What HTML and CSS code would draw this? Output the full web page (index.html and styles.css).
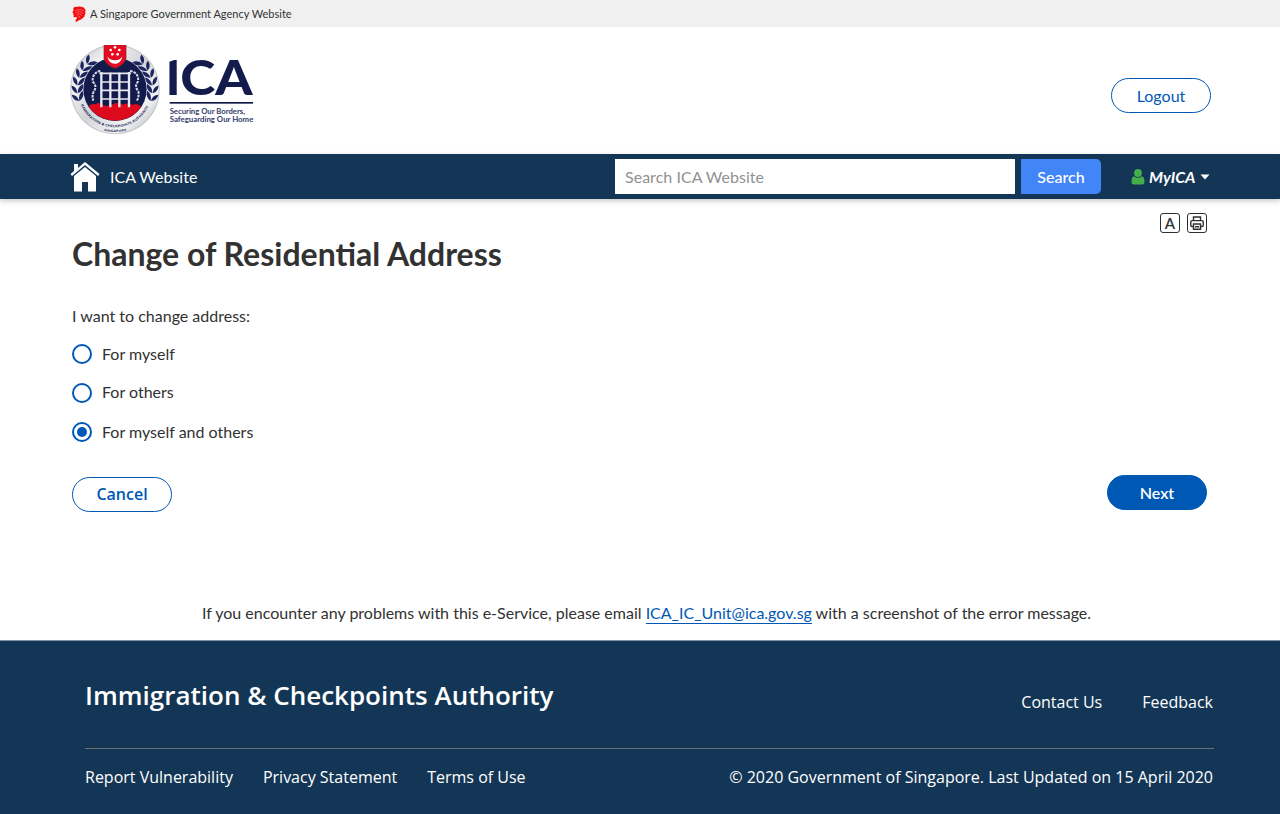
FILE: index.html
```html
<!DOCTYPE html>
<html lang="en">
<head>
<meta charset="utf-8">
<title>Change of Residential Address</title>
<link rel="stylesheet" href="styles.css">
</head>
<body>
<div class="masthead">
  <svg class="lion" viewBox="0 0 42 48"><path fill="#f40b0b" d="M5 5Q9 0 14 3Q20 0 27 2Q37 3 39 10L41 14L39 18L41 22L38 26V31L33 35L29 40L22 42L13 48Q9 45 11 42Q17 36 14 33L6 34L4 30L7 28L3 27L5 23L1 19L5 13Q2 8 5 5Z"/><path fill="none" stroke="#f8c4c4" stroke-width="1.3" d="M10 13Q24 7 36 14M9 19Q24 13 34 22M13 25Q24 20 30 29M16 30Q22 27 24 36"/></svg>
  <span class="masthead-text">A Singapore Government Agency Website</span>
</div>
<header class="header">
  <svg class="logo" viewBox="30 135 552 270">
    <defs>
      <linearGradient id="silver" x1="0" y1="0" x2="1" y2="1"><stop offset="0" stop-color="#aeb0b5"/><stop offset=".25" stop-color="#f1f1f3"/><stop offset=".5" stop-color="#d4d5d8"/><stop offset=".75" stop-color="#f4f4f5"/><stop offset="1" stop-color="#a4a6aa"/></linearGradient>
      <clipPath id="disc"><circle cx="165" cy="268" r="94"/></clipPath>
      <g id="leaf"><path d="M52 276Q34 270 35 252Q51 256 52 276Z"/><path d="M53 276Q53 256 70 249Q72 269 53 276Z"/></g>
      <g id="branch" fill="#1c2560">
        <use href="#leaf" transform="rotate(-14 165 268)"/><use href="#leaf" transform="rotate(-2 165 268)"/><use href="#leaf" transform="rotate(10 165 268)"/><use href="#leaf" transform="rotate(22 165 268)"/><use href="#leaf" transform="rotate(34 165 268)"/><use href="#leaf" transform="rotate(46 165 268)"/>
      </g>
      <path id="ringText" d="M62 314A112 112 0 0 0 268 314"/>
      <path id="ringCity" d="M120 389Q165 403 210 389"/>
    </defs>
    <circle cx="165" cy="268" r="135" fill="url(#silver)"/>
    <circle cx="165" cy="268" r="133" fill="none" stroke="#b4b6ba" stroke-width="2"/>
    <use href="#branch"/>
    <use href="#branch" transform="translate(330 0) scale(-1 1)"/>
    <circle cx="165" cy="268" r="95" fill="#131b4d"/>
    <path clip-path="url(#disc)" fill="#dc0a1c" d="M60 325L85 320Q92 309 106 313Q119 304 130 315Q143 322 157 313Q176 304 191 314Q204 307 218 315Q232 307 244 321L270 326V370H60Z"/>
    <path fill="none" stroke="#e7e8ee" stroke-width="7" d="M124 216V322M151 218V322M178 218V322M207 216V322"/>
    <path fill="none" stroke="#e7e8ee" stroke-width="5" d="M118 220H213M124 246H207M124 271H207M124 297H207"/>
    <g fill="none" stroke="#d6d8e2" stroke-width="6" stroke-dasharray="8 3"><path d="M121 212Q96 219 98 245Q113 258 101 275Q95 288 100 302"/><path d="M210 212Q238 219 234 245Q222 258 235 274Q238 288 231 302"/></g>
    <path fill="#e40b20" stroke="#8c2034" stroke-width="2" d="M132 135H198V175Q194 195 165 205Q136 195 132 175Z"/>
    <path fill="#fff" d="M142 169Q147 194 169 191Q184 189 187 169Q181 181 165 181Q148 181 142 169Z"/>
    <g fill="#fff"><circle cx="165" cy="142" r="4"/><circle cx="152" cy="150" r="4"/><circle cx="178" cy="150" r="4"/><circle cx="157" cy="163" r="4"/><circle cx="173" cy="163" r="4"/></g>
    <text class="seal-text"><textPath href="#ringText" textLength="256" lengthAdjust="spacingAndGlyphs">IMMIGRATION &amp; CHECKPOINTS AUTHORITY</textPath></text>
    <text class="seal-text seal-city"><textPath href="#ringCity" startOffset="12" textLength="68" lengthAdjust="spacingAndGlyphs">SINGAPORE</textPath></text>
    <text class="logo-name" y="285"><tspan x="317">I</tspan><tspan x="361" textLength="217" lengthAdjust="spacingAndGlyphs">CA</tspan></text>
    <path fill="#fff" d="M324 172H351V177L324 187Z"/>
    <rect x="329" y="306" width="250" height="5" fill="#131b4d"/>
    <text class="logo-tag" x="329" y="341" textLength="226" lengthAdjust="spacingAndGlyphs">Securing Our Borders,</text>
    <text class="logo-tag" x="329" y="366" textLength="251" lengthAdjust="spacingAndGlyphs">Safeguarding Our Home</text>
  </svg>
  <button class="pill logout">Logout</button>
</header>
<nav class="nav">
  <a class="home"><svg class="home-icon" viewBox="0 0 30 30"><path fill="#fff" d="M4 2H8V6L15 0L29.5 12L28 14L15 3L2 14L.5 12L4 9ZM15 5L26 14V29.5H18V20H12V29.5H4V14Z"/></svg><span class="home-text">ICA Website</span></a>
  <div class="search"><div class="search-input">Search ICA Website</div><button class="search-button">Search</button></div>
  <a class="account"><svg class="person" viewBox="0 0 14 16"><circle cx="7" cy="4" r="3.9" fill="#43ae4a"/><path fill="#43ae4a" d="M3 7.2Q7 10.4 11 7.2Q13.5 8 13.5 13Q13.5 15.5 11 15.5H3Q.5 15.5 .5 13Q.5 8 3 7.2Z"/></svg><span class="account-text">MyICA</span><svg class="caret" viewBox="0 0 10 6"><path fill="#fff" d="M.5.5H9.5L5 5.5Z"/></svg></a>
</nav>
<main class="main">
  <div class="tools">
    <span class="tool">A</span>
    <span class="tool"><svg class="printer" viewBox="0 0 14 14" fill="none" stroke="#2d3030" stroke-width="1.4"><path d="M3.5 4.5V1H10.5V4.5M3.5 10.5H2Q.8 10.5 .8 9.5V6Q.8 4.6 2 4.6H12Q13.2 4.6 13.2 6V9.5Q13.2 10.5 12 10.5H10.5M3.5 8H10.5V13.2H3.5ZM5 10.7H9"/></svg></span>
  </div>
  <h1 class="title">Change of Residential Address</h1>
  <p class="question">I want to change address:</p>
  <div class="options">
    <label class="option"><span class="radio"></span><span class="option-text">For myself</span></label>
    <label class="option option-others"><span class="radio"></span><span class="option-text">For others</span></label>
    <label class="option"><span class="radio radio-on"></span><span class="option-text">For myself and others</span></label>
  </div>
  <div class="actions"><button class="pill cancel">Cancel</button><button class="pill next">Next</button></div>
  <p class="help">If you encounter any problems with this e-Service, please email <a class="mail">ICA_IC_Unit@ica.gov.sg</a> with a screenshot of the error message.</p>
</main>
<footer class="footer">
  <div class="footer-top"><h2 class="agency">Immigration &amp; Checkpoints Authority</h2><div class="contact"><a>Contact Us</a><a>Feedback</a></div></div>
  <div class="footer-bottom"><div class="legal"><a>Report Vulnerability</a><a>Privacy Statement</a><a>Terms of Use</a></div><span>© 2020 Government of Singapore. Last Updated on 15 April 2020</span></div>
</footer>
</body>
</html>
```
FILE: styles.css
```css
* { box-sizing: border-box; }
body { margin: 0; height: 814px; display: flex; flex-direction: column; background: #fff; color: #323232; font: 16px/24px Lato, sans-serif; overflow: hidden; }
h1, h2, p { margin: 0; }
button { font: inherit; padding: 0; border: 0; }
.masthead { height: 27px; background: #f0f0f0; display: flex; align-items: center; padding: 0 0 0 72px; gap: 4px; font-size: 11px; line-height: 16px; }
.masthead-text { padding-top: 1px; }
.lion { width: 14px; height: 16px; }
.header { height: 127px; display: flex; justify-content: space-between; padding: 18px 69px 0 70px; }
.logo { width: 184px; height: 90px; }
.seal-text { font: 700 10px "Open Sans", sans-serif; fill: #272e62; }
.seal-city { font-size: 9px; }
.logo-name { font: 900 145px Lato, sans-serif; fill: #131b4d; }
.logo-tag { font: 700 22px Lato, sans-serif; fill: #343b6b; }
.pill { width: 100px; height: 35px; border-radius: 18px; border: 1px solid #0058b5; background: #fff; color: #0058b5; }
.logout { margin-top: 33px; padding-top: 1px; }
.nav { height: 45px; flex: none; display: flex; align-items: center; padding: 0 60px 0 70px; background: #143656; color: #fff; box-shadow: 0 2px 5px rgba(0,0,0,.22); }
.home { display: flex; align-items: center; gap: 10px; width: 545px; flex: none; }
.home-icon { width: 30px; height: 30px; }
.search { display: flex; gap: 6px; flex: none; }
.search-input { width: 400px; height: 35px; background: #fff; color: #919191; padding: 6px 10px; letter-spacing: .03px; }
.search-button { width: 80px; height: 35px; border-radius: 0 5px 5px 0; background: #4285f9; color: #fff; font-weight: 500; }
.account { display: flex; align-items: center; margin-left: 29.5px; }
.person { width: 14px; height: 16px; }
.account-text { font-weight: 700; font-style: italic; margin: 0 5px 0 4.5px; }
.caret { width: 10px; height: 6px; }
.main { height: 441px; padding: 14px 73px 0 72px; display: flex; flex-direction: column; }
.tools { display: flex; gap: 7px; justify-content: flex-end; }
.tool { width: 20px; height: 20px; border: 1px solid #2d3030; border-radius: 3px; display: flex; align-items: center; justify-content: center; font-weight: 600; font-size: 15px; }
.printer { width: 14px; height: 14px; }
.title { font-size: 32px; line-height: 40px; font-weight: 700; padding-top: 1px; }
.question { margin-top: 30px; }
.options { display: flex; flex-direction: column; gap: 15px; margin-top: 14px; }
.option { display: flex; align-items: center; gap: 10px; height: 24px; }
.option-others .option-text { padding-bottom: 2px; }
.radio { width: 20px; height: 20px; border: 2px solid #0058b5; border-radius: 50%; display: flex; align-items: center; justify-content: center; }
.radio-on::after { content: ""; width: 10px; height: 10px; border-radius: 50%; background: #0058b5; }
.actions { display: flex; justify-content: space-between; margin-top: 31px; }
.cancel { margin-top: 2px; padding-bottom: 1px; font-family: "Open Sans", sans-serif; font-weight: 600; }
.next { background: #0058b5; color: #fff; font-weight: 600; }
.help { margin: 89px 0 0 130px; white-space: nowrap; }
.mail { color: #0058b5; border-bottom: 1px solid #0058b5; padding-bottom: 1px; }
.footer { height: 174px; flex: none; background: #143656; color: #fff; border-top: 1px solid #7d94a4; padding: 0 66px 0 85px; font-family: "Open Sans", sans-serif; }
.footer-top { height: 108px; border-bottom: 1px solid #6d7174; display: flex; justify-content: space-between; }
.agency { font-size: 26px; line-height: 36px; font-weight: 600; padding-top: 36px; }
.contact { display: flex; gap: 40px; padding: 49px 1px 0 0; }
.footer-bottom { display: flex; justify-content: space-between; padding: 16px 1px 0 0; }
.legal { display: flex; gap: 30px; }
```
